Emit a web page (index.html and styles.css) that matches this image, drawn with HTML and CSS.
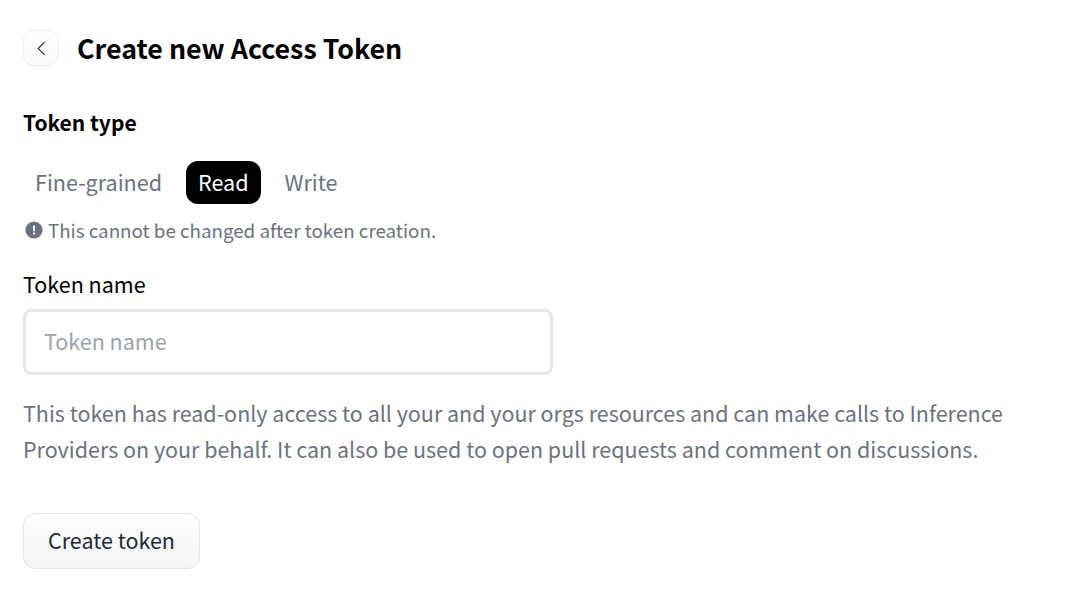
FILE: index.html
```html
<!DOCTYPE html>
<html lang="en">
<head>
    <meta charset="UTF-8">
    <meta name="viewport" content="width=device-width, initial-scale=1.0">
    <title>Create new Access Token</title>
    <link rel="stylesheet" href="styles.css">
</head>
<body>
    <div class="header">
        <button class="back-button">
            <svg width="16" height="16" viewBox="0 0 16 16" fill="none">
                <path d="M11.6 2.2 5.2 8.5l6.4 6.3" stroke="#1f2937" stroke-width="1.1"/>
            </svg>
        </button>
        <h1 class="title">Create new Access Token</h1>
    </div>

    <div class="section-label">Token type</div>
    <div class="tabs">
        <div class="tab">Fine-grained</div>
        <div class="tab active">Read</div>
        <div class="tab">Write</div>
    </div>
    <div class="notice">
        <svg class="notice-icon" width="18" height="18" viewBox="0 0 18 18">
            <circle cx="9" cy="9" r="8.6" fill="#6b7280"/>
            <rect x="8" y="4.2" width="2" height="6" rx="0.8" fill="#fff"/>
            <circle cx="9" cy="12.6" r="1.15" fill="#fff"/>
        </svg>
        This cannot be changed after token creation.
    </div>

    <label class="field-label" for="tokenName">Token name</label>
    <input class="text-input" id="tokenName" type="text" placeholder="Token name">

    <p class="description">This token has read-only access to all your and your orgs resources and can make calls to Inference Providers on your behalf. It can also be used to open pull requests and comment on discussions.</p>

    <button class="create-button">Create token</button>
</body>
</html>
```

FILE: styles.css
```css
body {
    font-family: "Noto Sans CJK JP", "Open Sans", sans-serif;
    margin: 0;
    padding: 30px 23px 0;
    background-color: white;
    color: black;
}
.header {
    display: flex;
    align-items: center;
    gap: 18px;
    margin-bottom: 38px;
}
.back-button {
    width: 36px;
    height: 36px;
    padding: 0;
    display: flex;
    align-items: center;
    justify-content: center;
    border: 1px solid #eceef1;
    border-radius: 10px;
    background: linear-gradient(to bottom, #ffffff, #f9fafb);
}
.title {
    margin: 0;
    font-size: 26.8px;
    line-height: 36px;
    font-weight: 700;
}
.section-label {
    font-size: 21px;
    line-height: 36px;
    font-weight: 600;
    margin-bottom: 21px;
}
.tabs {
    display: flex;
    gap: 12px;
    margin-bottom: 12px;
}
.tab {
    padding: 0 12px;
    height: 43px;
    line-height: 41px;
    font-size: 21.55px;
    color: #6b7280;
    border-radius: 12px;
}
.tab.active {
    background-color: black;
    color: white;
}
.notice {
    display: flex;
    align-items: center;
    gap: 5px;
    font-size: 18.75px;
    line-height: 28px;
    color: #6b7280;
    margin-bottom: 26px;
}
.notice-icon {
    margin-left: 2px;
}
.field-label {
    display: block;
    font-size: 21.5px;
    line-height: 28px;
    margin-bottom: 11px;
}
.text-input {
    display: block;
    width: 530px;
    height: 66px;
    box-sizing: border-box;
    padding: 0 18px 3px;
    border: 3px solid #e5e7eb;
    border-radius: 8px;
    font-family: inherit;
    font-size: 21.5px;
    outline: none;
}
.text-input::placeholder {
    color: #9ca3af;
}
.description {
    margin: 20px 0 46px;
    font-size: 21.47px;
    line-height: 36px;
    color: #6b7280;
    width: 1000px;
}
.create-button {
    display: block;
    width: 177px;
    height: 56px;
    border: 1px solid #e5e7eb;
    border-radius: 12px;
    background: linear-gradient(to bottom, #ffffff, #f3f4f6);
    font-family: inherit;
    font-size: 21.5px;
    color: #1f2937;
    padding: 0 0 3px;
}
```
